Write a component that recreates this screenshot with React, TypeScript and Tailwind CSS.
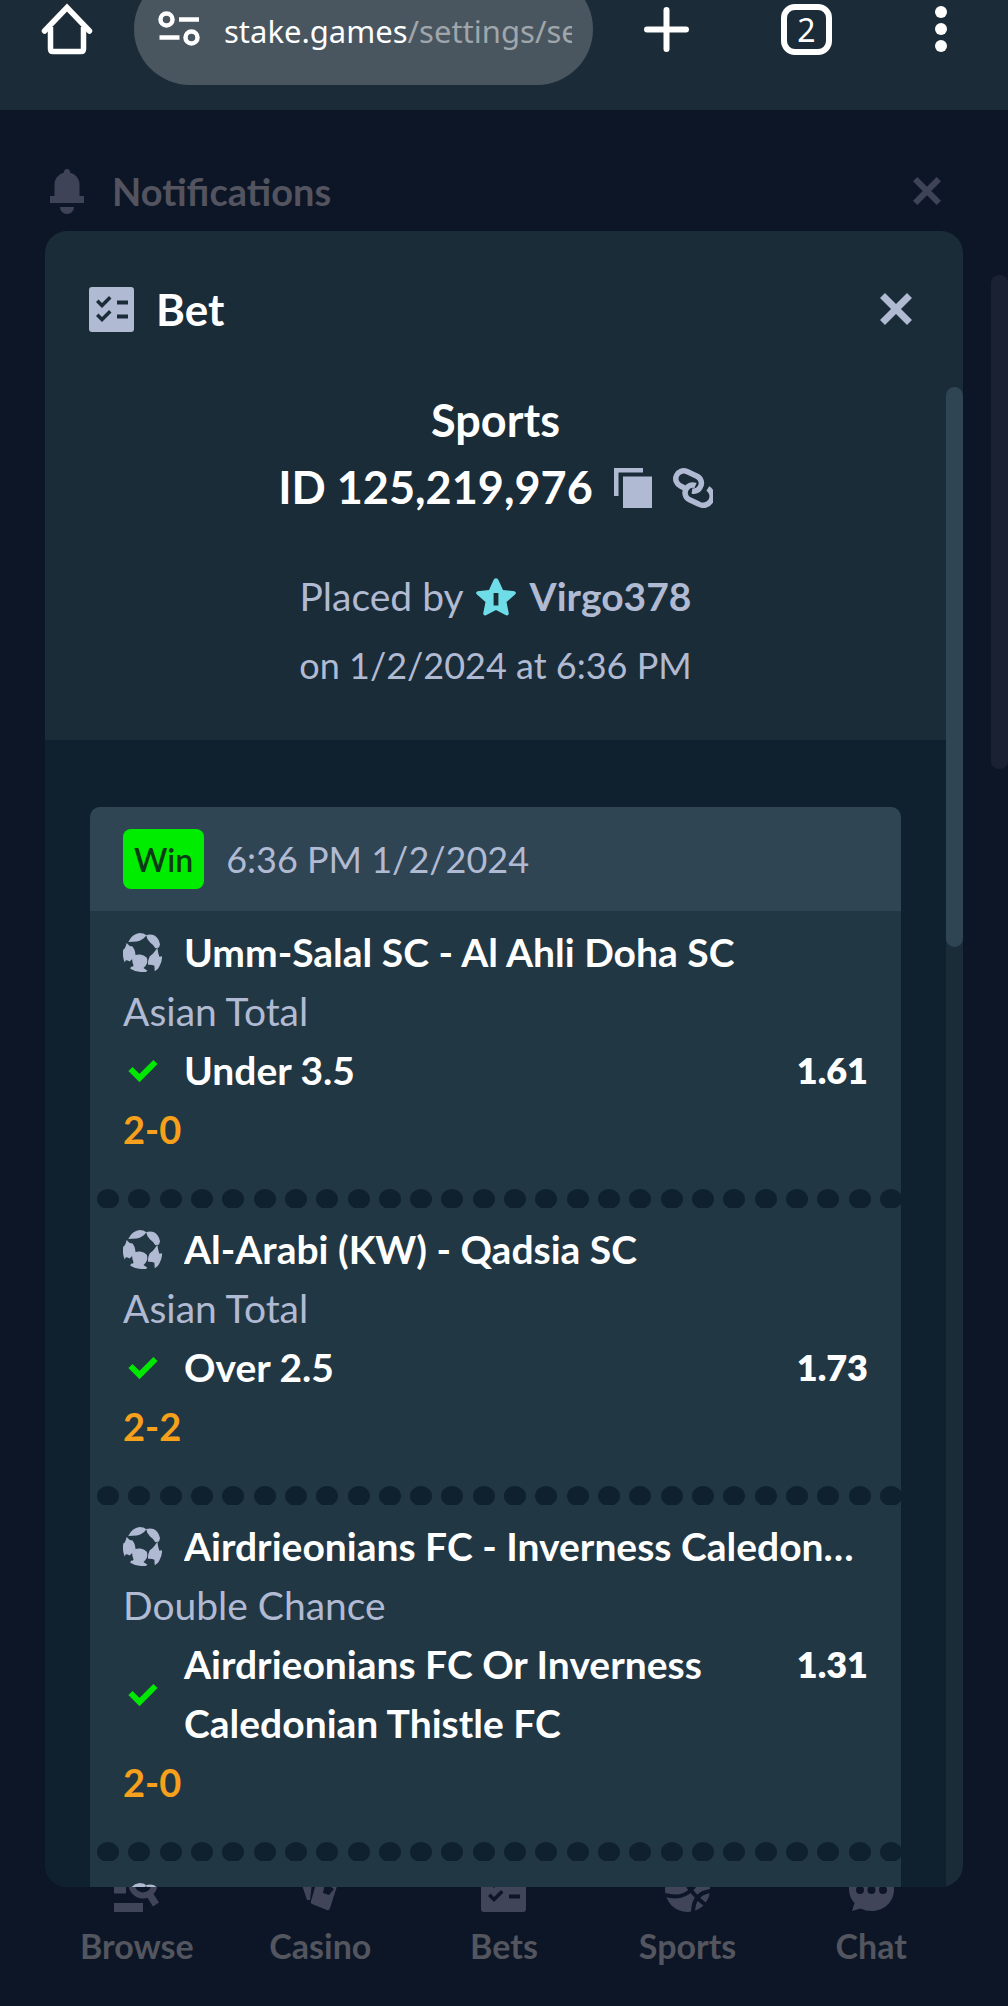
type IconProps = { className?: string };

type Leg = {
  match: string;
  market: string;
  pick: string;
  odds: string;
  score: string;
};

const legs: Leg[] = [
  { match: 'Umm-Salal SC - Al Ahli Doha SC', market: 'Asian Total', pick: 'Under 3.5', odds: '1.61', score: '2-0' },
  { match: 'Al-Arabi (KW) - Qadsia SC', market: 'Asian Total', pick: 'Over 2.5', odds: '1.73', score: '2-2' },
  {
    match: 'Airdrieonians FC - Inverness Caledonian Thistle FC',
    market: 'Double Chance',
    pick: 'Airdrieonians FC Or Inverness Caledonian Thistle FC',
    odds: '1.31',
    score: '2-0',
  },
];

const navItems = [
  { title: 'Browse', href: '#browse', Icon: BrowseIcon },
  { title: 'Casino', href: '#casino', Icon: CasinoIcon },
  { title: 'Bets', href: '#bets', Icon: BetIcon },
  { title: 'Sports', href: '#sports', Icon: SportsIcon },
  { title: 'Chat', href: '#chat', Icon: ChatIcon },
];

const HOLES = Array.from({ length: 26 }, (_, i) => i);

function HomeIcon({ className }: IconProps) {
  return (
    <svg className={className} viewBox="0 0 52 52" fill="none" stroke="currentColor" strokeWidth="5.5">
      <path d="M3.500 28 26 4.500 48.500 28" strokeLinecap="round" strokeLinejoin="miter" />
      <path d="M9.500 24v22q0 2.500 2.500 2.500h28q2.500 0 2.500-2.500V24" />
    </svg>
  );
}

function SiteInfoIcon({ className }: IconProps) {
  return (
    <svg className={className} viewBox="0 0 42 36" fill="none" stroke="currentColor" strokeWidth="4.5">
      <circle cx="8.500" cy="8.500" r="6" />
      <path d="M21 8.500h20M1.500 26.500h20" />
      <circle cx="33.500" cy="26.500" r="6" />
    </svg>
  );
}

function PlusIcon({ className }: IconProps) {
  return (
    <svg className={className} viewBox="0 0 45 45" fill="none" stroke="currentColor" strokeWidth="6" strokeLinecap="round">
      <path d="M22.500 3v39M3 22.500h39" />
    </svg>
  );
}

function MoreIcon({ className }: IconProps) {
  return (
    <svg className={className} viewBox="0 0 12 46" fill="currentColor">
      <circle cx="6" cy="6" r="6" />
      <circle cx="6" cy="23" r="6" />
      <circle cx="6" cy="40" r="6" />
    </svg>
  );
}

function BellIcon({ className }: IconProps) {
  return (
    <svg className={className} viewBox="0 0 34 45" fill="currentColor">
      <path d="M17 0a3 3 0 0 1 3 3.500A12.500 12.500 0 0 1 29.500 16v11H34v7H0v-7h4.500V16A12.500 12.500 0 0 1 14 3.500 3 3 0 0 1 17 0ZM10 38h14a7 7 0 0 1-14 0Z" />
    </svg>
  );
}

function CloseIcon({ className }: IconProps) {
  return (
    <svg className={className} viewBox="0 0 32 32" fill="none" stroke="currentColor" strokeWidth="7">
      <path d="m2.500 2.500 27 27M29.500 2.500l-27 27" />
    </svg>
  );
}

function BetIcon({ className }: IconProps) {
  return (
    <svg className={className} viewBox="0 0 45 45" fill="currentColor">
      <path
        fillRule="evenodd"
        d="M3 0h39q3 0 3 3v39q0 3-3 3H3q-3 0-3-3V3q0-3 3-3ZM9.500 12.500 7 15l6 6L22.500 11.500 20 9l-7 7ZM28 13.500v4h11v-4ZM9.500 26.500 7 29l6 6 9.500-9.500L20 23l-7 7ZM28 27.500v4h11v-4Z"
      />
    </svg>
  );
}

function CopyIcon({ className }: IconProps) {
  return (
    <svg className={className} viewBox="0 0 38 40" fill="currentColor">
      <path d="M0 0h29v4.500H4.500V28H0ZM9 8.500h29V40H9Z" />
    </svg>
  );
}

function LinkIcon({ className }: IconProps) {
  return (
    <svg className={className} viewBox="0 0 40 40" fill="none" stroke="currentColor" strokeWidth="5.5">
      <path d="M11.500 20 7.500 18A7.600 7.600 0 0 1 14 3.500l10.500 5A7.600 7.600 0 0 1 27 19.500c-1.500 3-4.500 4-8 3.500" />
      <path d="M34.800 20.500A8 8 0 0 1 25.500 36l-9-4.200A7.600 7.600 0 0 1 13.500 20.500c1.500-3 5.500-4.500 9-3" />
    </svg>
  );
}

function StarIcon({ className }: IconProps) {
  return (
    <svg className={className} viewBox="0 0 40 38" fill="currentColor">
      <path
        fillRule="evenodd"
        d="M17.800 1.500q2.200-2.500 4.400 0l4.800 10.500 11.500 1.200q2.300 1 .8 3L30.500 24l2.300 11.500q-.3 2.500-2.800 1.800L20 32l-10 5.300q-2.500.7-2.800-1.800L9.500 24 .7 16.200q-1.500-2 .8-3L13 12ZM17.600 15v12.500h4.800V15Z"
      />
    </svg>
  );
}

function FootballIcon({ className }: IconProps) {
  return (
    <svg className={className} viewBox="0 0 118 118" fill="currentColor">
      <path d="M16 27Q27 3 50 0q12 0 21 7Q60 22 42 26q-14 1-26 1Z" />
      <path d="M70 6q14-4 24 1 14 8 18 27l-3 10-11 2q-6-10-16-17Q72 20 70 6Z" />
      <path d="M11 30q7 10 18 11 8 10 9 24-6 12-18 21-8-4-12-3l-3 6Q-3 70 1 50Q8 46 11 30Z" />
      <path d="M104 45q2 16 6 27l8-2q1 17-8 31-4 10-14 15l-1-17q-8-4-19-3-2-12 5-26 10-6 15-14Z" />
      <path d="M28 71q10-7 24-6 12 1 20 10 3 10 0 18-5 10-10 13l12 8-5 4q-28 2-47-10l2-6q8 0 8-3-6-14-4-28Z" />
    </svg>
  );
}

function CheckIcon({ className }: IconProps) {
  return (
    <svg className={className} viewBox="0 0 39 39" fill="none" stroke="currentColor" strokeWidth="6">
      <path d="m7.500 18 9 9L32.500 11" />
    </svg>
  );
}

function BrowseIcon({ className }: IconProps) {
  return (
    <svg className={className} viewBox="0 0 45 45" fill="none" stroke="currentColor">
      <path d="M0 5h16M0 22h12M0 40.500h29" strokeWidth="9" />
      <circle cx="29" cy="17" r="11.500" strokeWidth="6" />
      <path d="m34 25 8 12.500" strokeWidth="7" />
    </svg>
  );
}

function CasinoIcon({ className }: IconProps) {
  return (
    <svg className={className} viewBox="0 0 45 45" fill="currentColor">
      <path d="M0 6 16 0 12 33 9 33Z" />
      <path fillRule="evenodd" d="m21 3 19 7q2 1 1 3L32 41q-1 3-3 2L14 37q-2-1-1-3L20 10ZM27 16l-2 10 6 2 5-6Z" />
    </svg>
  );
}

function SportsIcon({ className }: IconProps) {
  return (
    <svg className={className} viewBox="0 0 45 45">
      <circle cx="22.500" cy="22.500" r="22.500" fill="currentColor" />
      <path d="M0 28q17 5 27-6T34 0M16 6q8 20 26 33M46 24Q28 26 28 46" fill="none" stroke="#0d1626" strokeWidth="4" />
    </svg>
  );
}

function ChatIcon({ className }: IconProps) {
  return (
    <svg className={className} viewBox="0 0 45 45" fill="currentColor">
      <path
        fillRule="evenodd"
        d="M22.500 2C36 2 45 11 45 22.500S36 44 22.500 44q-6 0-11-2.500L3 44l2.500-8Q0 30 0 22.500C0 11 9 2 22.500 2ZM7 23a4 4 0 1 0 8 0 4 4 0 1 0-8 0ZM18.500 23a4 4 0 1 0 8 0 4 4 0 1 0-8 0ZM30 23a4 4 0 1 0 8 0 4 4 0 1 0-8 0Z"
      />
    </svg>
  );
}

function BrowserBar() {
  return (
    <header className="flex h-[110px] shrink-0 items-start overflow-hidden bg-[#1b2c38] pl-[41px] pr-[61px] text-white">
      <button aria-label="Home" className="mt-[3px] shrink-0">
        <HomeIcon className="size-[52px]" />
      </button>
      <div className="-mt-[27px] ml-[41px] mr-[51px] flex h-28 min-w-0 flex-1 items-center rounded-full bg-[#49565f] pl-6 pr-[21px]">
        <SiteInfoIcon className="h-9 w-[42px] shrink-0" />
        <a
          href="#settings"
          className="ml-6 min-w-0 flex-1 overflow-hidden whitespace-nowrap pt-1 font-['Noto_Sans',sans-serif] text-[31px] leading-[48px]"
        >
          stake.games<span className="text-[#a0a6ab]">/settings/security</span>
        </a>
      </div>
      <button aria-label="New tab" className="mt-[7px] shrink-0">
        <PlusIcon className="size-[45px]" />
      </button>
      <button
        aria-label="Open tabs"
        className="ml-[92px] mt-1 flex size-[51px] shrink-0 items-center justify-center rounded-[14px] border-6 border-white font-['Noto_Sans',sans-serif] text-[32px] leading-none"
      >
        2
      </button>
      <button aria-label="More options" className="ml-[103px] mt-1.5 shrink-0">
        <MoreIcon className="h-[46px] w-3" />
      </button>
    </header>
  );
}

function BetLeg({ leg }: { leg: Leg }) {
  return (
    <li>
      <div className="px-[33px] pb-[30px] pt-3">
        <div className="flex items-center gap-[22px] pr-2">
          <FootballIcon className="size-[39px] shrink-0 text-[#b1bad3]" />
          <a href="#match" className="min-w-0 truncate font-bold text-white">
            {leg.match}
          </a>
        </div>
        <p className="text-[#b1bad3]">{leg.market}</p>
        <div className="flex items-center gap-[22px]">
          <CheckIcon className="size-[39px] shrink-0 text-[#00e701]" />
          <span className="min-w-0 flex-1 pr-16 font-bold text-white">{leg.pick}</span>
          <span className="self-start text-[36px] font-extrabold text-white">{leg.odds}</span>
        </div>
        <p className="text-[38px] font-bold text-[#f7a01b]">{leg.score}</p>
      </div>
      {/* Perforated ticket edge */}
      <div className="-mr-px ml-[7px] flex h-[19px] justify-between overflow-hidden">
        {HOLES.map((hole) => (
          <span key={hole} className="h-5 w-[22px] rounded-[50%] bg-[#0f212e]" />
        ))}
      </div>
    </li>
  );
}

function BetModal() {
  return (
    <section
      role="dialog"
      aria-label="Bet"
      className="absolute inset-x-[45px] bottom-[119px] top-[121px] flex flex-col overflow-hidden rounded-[22px] bg-[#1a2c38]"
    >
      <div className="flex h-[156px] shrink-0 items-center px-11">
        <BetIcon className="size-[45px] text-[#b1bad3]" />
        <h2 className="ml-[22px] flex-1 text-[44px] font-bold leading-[60px] text-white">Bet</h2>
        <button aria-label="Close" className="mr-[7px] text-[#b1bad3]">
          <CloseIcon className="size-8" />
        </button>
      </div>

      <div className="flex min-h-0 flex-1">
        <div className="min-w-0 flex-1 overflow-hidden bg-[#0f212e]">
          <div className="bg-[#1a2c38] pb-10 text-center">
            <p className="text-[45px] font-bold leading-[67px] text-white">Sports</p>
            <div className="flex items-center justify-center gap-[21px] text-[#b1bad3]">
              <span className="text-[45px] font-bold leading-[67px] text-white">ID 125,219,976</span>
              <button aria-label="Copy ID">
                <CopyIcon className="h-10 w-[38px]" />
              </button>
              <button aria-label="Copy link">
                <LinkIcon className="size-10" />
              </button>
            </div>
            <div className="mt-[41px] flex items-center justify-center text-[39px] leading-[69px] text-[#b1bad3]">
              <span>Placed by</span>
              <StarIcon className="ml-3 mr-[14px] h-[38px] w-10 text-[#6fdde7]" />
              <a href="#user" className="font-bold">
                Virgo378
              </a>
            </div>
            <p className="text-[36px] leading-[69px] text-[#b1bad3]">on 1/2/2024 at 6:36 PM</p>
          </div>

          <div className="mx-[45px] mt-[67px] overflow-hidden rounded-t-[10px] bg-[#213743] text-[39px] leading-[59px]">
            <div className="flex h-[104px] items-center gap-[22px] bg-[#2f4553] px-[33px]">
              <span className="flex h-[60px] items-center rounded-lg bg-[#00ed00] px-[11px] text-[32px] font-semibold text-[#0b3b16]">
                Win
              </span>
              <time className="text-[36px] text-[#b1bad3]">6:36 PM 1/2/2024</time>
            </div>
            <ul>
              {legs.map((leg) => (
                <BetLeg key={leg.match} leg={leg} />
              ))}
              <li className="px-[33px] pt-[22px]">
                <FootballIcon className="size-[39px] text-[#b1bad3]" />
              </li>
            </ul>
          </div>
        </div>

        <div className="w-[17px] shrink-0">
          <div className="h-[560px] rounded-full bg-[#2f4553]" />
        </div>
      </div>
    </section>
  );
}

export default function App() {
  return (
    <div className="flex h-screen flex-col overflow-hidden bg-[#0d1626] font-['Lato',sans-serif]">
      <BrowserBar />

      <main className="relative flex min-h-0 flex-1 flex-col justify-between">
        {/* Dimmed page behind the dialog */}
        <div className="flex items-center pl-[50px] pr-[67px] pt-[51px] text-[#3f4357]">
          <BellIcon className="h-[45px] w-[34px]" />
          <h1 className="ml-7 flex-1 text-[38px] font-bold leading-[60px] text-[#53545f]">Notifications</h1>
          <button aria-label="Close notifications">
            <CloseIcon className="size-7" />
          </button>
        </div>

        <div className="absolute right-0 top-[165px] h-[494px] w-[17px] rounded-lg bg-[#1a2133]" />

        <nav className="flex px-[45px] pb-[37px]">
          {navItems.map(({ title, href, Icon }) => (
            <a key={title} href={href} className="flex flex-1 flex-col items-center gap-[11px] text-[#41455a]">
              <Icon className="size-[45px]" />
              <span className="text-[34px] font-bold leading-[46px] text-[#53555f]">{title}</span>
            </a>
          ))}
        </nav>

        <BetModal />
      </main>
    </div>
  );
}
